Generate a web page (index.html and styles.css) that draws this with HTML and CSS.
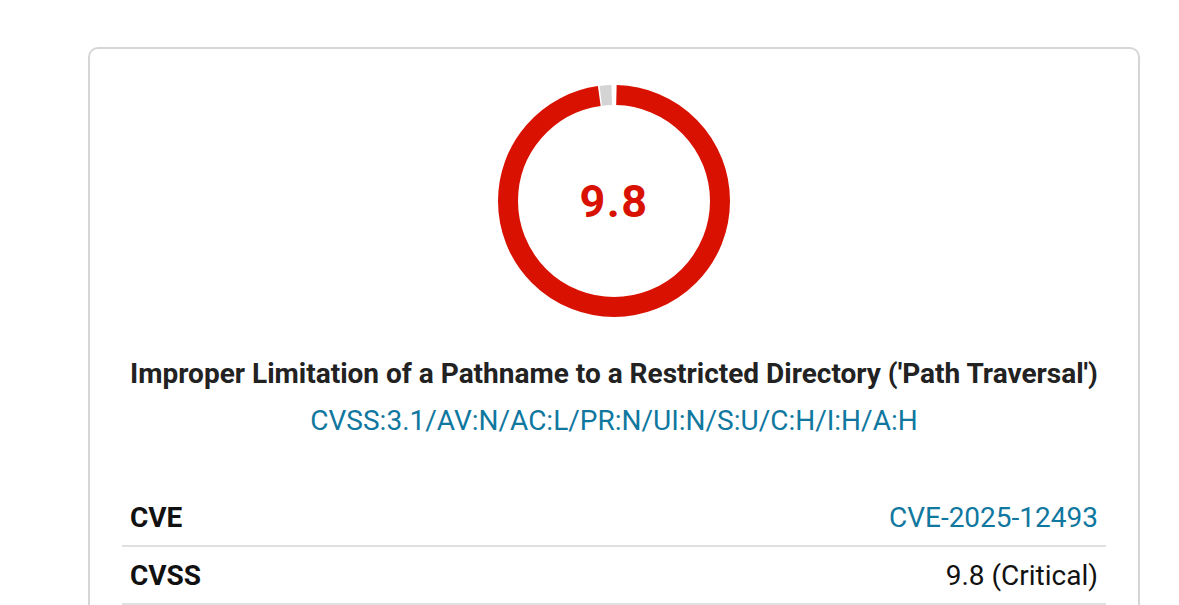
FILE: index.html
```html
<!DOCTYPE html>
<html lang="en">
<head>
<meta charset="utf-8">
<title>CVE-2025-12493</title>
<link rel="stylesheet" href="styles.css">
</head>
<body>
<div class="card">
  <div class="gauge">
    <svg class="gauge-svg" width="232" height="232" viewBox="0 0 232 232">
      <g transform="rotate(-90 116 116)">
        <circle cx="116" cy="116" r="106" fill="none" stroke="#d81100" stroke-width="20" stroke-dasharray="648 100" stroke-dashoffset="-2.5"/>
        <circle cx="116" cy="116" r="106" fill="none" stroke="#d4d4d4" stroke-width="20" stroke-dasharray="0 652 11 100"/>
      </g>
    </svg>
    <div class="gauge-score">9.8</div>
  </div>
  <h2 class="title">Improper Limitation of a Pathname to a Restricted Directory ('Path Traversal')</h2>
  <div class="vector"><a href="#" class="link">CVSS:3.1/AV:N/AC:L/PR:N/UI:N/S:U/C:H/I:H/A:H</a></div>
  <table class="info">
    <tr>
      <th>CVE</th>
      <td><a href="#" class="link">CVE-2025-12493</a></td>
    </tr>
    <tr>
      <th>CVSS</th>
      <td>9.8 (Critical)</td>
    </tr>
  </table>
</div>
</body>
</html>
```
FILE: styles.css
```css
html, body {
  margin: 0;
  padding: 0;
  background: #ffffff;
}
body {
  font-family: Roboto, "Liberation Sans", Arial, sans-serif;
  color: #111;
  padding: 47px 39px 0 88px;
}
.card {
  width: 1052px;
  box-sizing: border-box;
  border: 2px solid #d6d6d6;
  border-radius: 10px;
  padding: 36px 32px 40px 32px;
}
.gauge {
  position: relative;
  width: 232px;
  height: 232px;
  margin: 0 auto;
}
.gauge-svg {
  display: block;
}
.gauge-score {
  position: absolute;
  left: 0;
  right: 0;
  top: 0;
  bottom: 0;
  display: flex;
  align-items: center;
  justify-content: center;
  font-size: 45px;
  font-weight: 700;
  color: #d81100;
  letter-spacing: 1.5px;
}
.title {
  margin: 36px 0 0 0;
  font-size: 28px;
  line-height: 42px;
  font-weight: 700;
  text-align: center;
  color: #222;
}
.vector {
  margin-top: 5px;
  font-size: 28px;
  line-height: 42px;
  text-align: center;
}
.link {
  color: #10789f;
  text-decoration: none;
}
.info {
  width: 100%;
  margin-top: 47px;
  border-collapse: collapse;
  font-size: 28px;
}
.info th,
.info td {
  padding: 0 8px;
  height: 56px;
  border-bottom: 2px solid #e0e0e0;
}
.info th {
  text-align: left;
  font-weight: 700;
  color: #111;
}
.info td {
  text-align: right;
  color: #111;
}
```
